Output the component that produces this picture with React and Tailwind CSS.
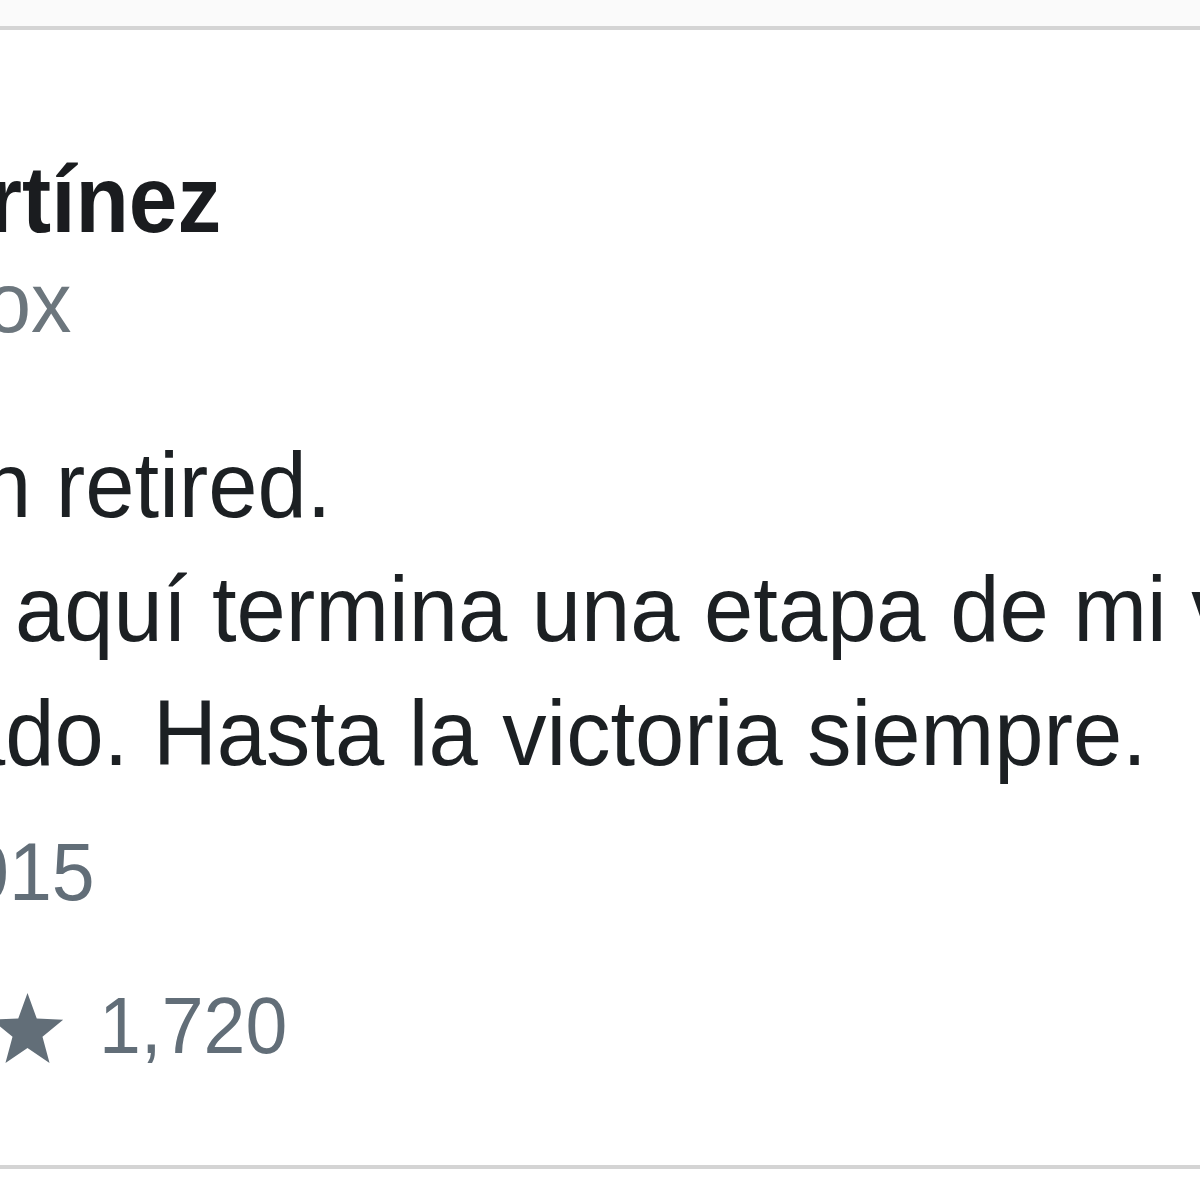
import React from "react";

const font = "font-['Liberation_Sans',Arial,Helvetica,sans-serif]";

function Star() {
  return (
    <svg width="75" height="70" viewBox="0 0 100 90.45" preserveAspectRatio="none" className="shrink-0">
      <polygon
        fill="#626e78"
        points="50,0 62.34,33.01 97.55,34.55 69.97,56.49 79.39,90.45 50,71 20.61,90.45 30.03,56.49 2.45,34.55 37.66,33.01"
      />
    </svg>
  );
}

export default function App() {
  return (
    <div className={`w-[1200px] h-[1200px] overflow-hidden bg-white flex flex-col ${font}`}>
      <div className="h-[26px] bg-[#fafafa] shrink-0" />
      <div className="h-[4px] bg-[#d4d4d4] shrink-0" />

      {/* name */}
      <div className="mt-[123px] h-[94px] leading-[94px] text-[94px] font-bold text-[#1a1c1f] whitespace-nowrap shrink-0">
        <span className="inline-block ml-[-12px] origin-left scale-x-[0.93]">rtínez</span>
      </div>

      {/* handle */}
      <div className="mt-[13px] h-[85px] leading-[85px] text-[85px] text-[#6c767d] whitespace-nowrap shrink-0">
        <span className="inline-block ml-[-14px] origin-left scale-x-[0.952]">ox</span>
      </div>

      {/* tweet text */}
      <div className="mt-[78px] flex flex-col text-[93px] text-[#1c2023] shrink-0">
        <div className="h-[124px] leading-[124px] whitespace-nowrap">
          <span className="inline-block ml-[-18px] origin-left scale-x-[0.952]">n retired.</span>
        </div>
        <div className="h-[124px] leading-[124px] whitespace-nowrap">
          <span className="inline-block ml-[15px] origin-left scale-x-[0.952]">aquí termina una etapa de mi vida</span>
        </div>
        <div className="h-[124px] leading-[124px] whitespace-nowrap">
          <span className="inline-block ml-[-44px] origin-left scale-x-[0.952]">ado. Hasta la victoria siempre.</span>
        </div>
      </div>

      {/* date */}
      <div className="mt-[37px] h-[81px] leading-[81px] text-[81px] text-[#626e78] whitespace-nowrap shrink-0">
        <span className="inline-block ml-[-34px] origin-left scale-x-[0.952]">015</span>
      </div>

      {/* stats */}
      <div className="mt-[73px] h-[79px] flex items-start shrink-0">
        <div className="ml-[-10px] mt-[7px]">
          <Star />
        </div>
        <div className="ml-[34px] h-[79px] leading-[79px] text-[79px] text-[#626e78] whitespace-nowrap">
          <span className="inline-block origin-left scale-x-[0.952]">1,720</span>
        </div>
      </div>

      <div className="mt-[100px] h-[4px] bg-[#d4d4d4] shrink-0" />
    </div>
  );
}
